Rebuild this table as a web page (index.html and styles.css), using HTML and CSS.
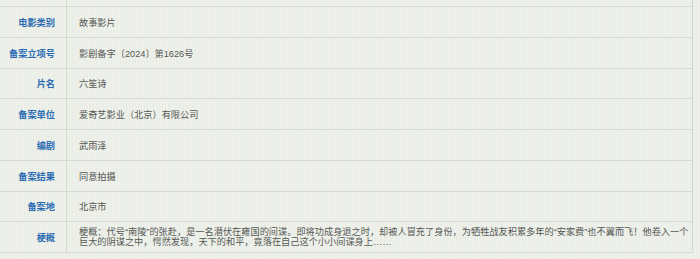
FILE: index.html
```html
<!DOCTYPE html>
<html lang="zh-CN">
<head>
<meta charset="utf-8">
<title>影片备案信息</title>
<link rel="stylesheet" href="styles.css">
</head>
<body>
<div class="info">
  <div class="cell label spacer"></div><div class="cell value spacer"></div>
  <div class="cell label">电影类别</div><div class="cell value">故事影片</div>
  <div class="cell label">备案立项号</div><div class="cell value">影剧备字〔2024〕第1626号</div>
  <div class="cell label">片名</div><div class="cell value">六笙诗</div>
  <div class="cell label">备案单位</div><div class="cell value">爱奇艺影业（北京）有限公司</div>
  <div class="cell label">编剧</div><div class="cell value">武雨泽</div>
  <div class="cell label">备案结果</div><div class="cell value">同意拍摄</div>
  <div class="cell label">备案地</div><div class="cell value">北京市</div>
  <div class="cell label">梗概</div><div class="cell value summary"><p>梗概：代号“南陵”的张赴，是一名潜伏在雍国的间谍。即将功成身退之时，却被人冒充了身份，为牺牲战友积累多年的“安家费”也不翼而飞！他卷入一个<br>巨大的阴谋之中，愕然发现，天下的和平，竟落在自己这个小小间谍身上……</p></div>
</div>
</body>
</html>
```
FILE: styles.css
```css
html, body {
  margin: 0;
  padding: 0;
}
body {
  width: 700px;
  height: 259px;
  overflow: hidden;
  background-color: #eef0ea;
  background-image: repeating-linear-gradient(90deg, rgba(0,0,0,0.018) 0 1px, rgba(255,255,255,0) 1px 3px);
  font-family: "Liberation Sans", "Noto Sans CJK SC", sans-serif;
  font-size: 9.2px;
}
.info {
  display: grid;
  grid-template-columns: 67px 626px;
  grid-template-rows: 7px;
  grid-auto-rows: 30.75px;
}
.cell {
  box-sizing: border-box;
  border-bottom: 1px solid #d6d9d2;
  border-right: 1px solid #d6d9d2;
  display: flex;
  align-items: center;
}
.label {
  justify-content: flex-end;
  padding-right: 11px;
  color: #2b6cb3;
  font-weight: bold;
}
.value {
  padding-left: 12px;
  padding-right: 0;
  color: #555855;
}
.summary p {
  margin: 0;
  line-height: 10px;
  white-space: nowrap;
}
```
